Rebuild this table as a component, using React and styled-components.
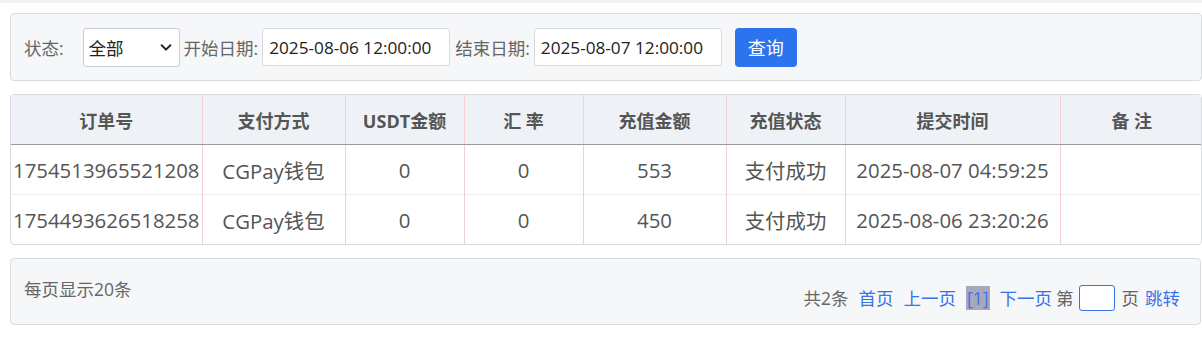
import React from "react";
import styled, { createGlobalStyle } from "styled-components";

const GlobalStyle = createGlobalStyle`
  body {
    margin: 0;
    background: #fff;
    font-family: "Open Sans", "Noto Sans CJK SC", sans-serif;
    color: #555;
  }
`;

const Page = styled.div`
  border-top: 3px solid #f3f3f3;
  padding: 10px 0 0 10px;
  width: 1192px;
`;

const Panel = styled.div`
  background: #f6f7f9;
  border: 1px solid #d8dce1;
  border-radius: 4px;
  box-sizing: border-box;
`;

const FilterBar = styled(Panel)`
  height: 68px;
  display: flex;
  align-items: center;
  padding: 0 0 0 13px;
  font-size: 17.5px;
`;

const Label = styled.span`
  color: #666;
  margin-right: ${(p) => p.gap || 4}px;
`;

const Select = styled.div`
  width: 97px;
  height: 39px;
  box-sizing: border-box;
  border: 1px solid #c9cdd2;
  border-radius: 3px;
  background: #fff;
  display: flex;
  align-items: center;
  justify-content: space-between;
  padding: 0 6px 0 5px;
  color: #222;
  margin-right: 4px;
`;

const DateInput = styled.div`
  width: 188px;
  height: 38px;
  box-sizing: border-box;
  border: 1px solid #d6d9dd;
  border-radius: 3px;
  background: #fff;
  display: flex;
  align-items: center;
  padding-left: 6px;
  color: #222;
  font-size: 17.2px;
  margin-right: 5px;
`;

const Button = styled.button`
  margin-left: 8px;
  width: 62px;
  height: 39px;
  border: none;
  border-radius: 4px;
  background: #2b74ee;
  color: #fff;
  font-family: inherit;
  font-size: 18px;
`;

const TableWrap = styled(Panel)`
  margin-top: 13px;
  background: #fff;
  overflow: hidden;
`;

const Table = styled.table`
  width: 100%;
  border-collapse: collapse;
  table-layout: fixed;
`;

const Th = styled.th`
  height: 49px;
  padding: 0;
  background: #eef2f6;
  border-bottom: 1px solid #999;
  border-left: 1px solid #f2cfd0;
  font-size: 18px;
  font-weight: bold;
  color: #555;
  &:first-child {
    border-left: none;
  }
`;

const Td = styled.td`
  height: 49px;
  padding: 0;
  text-align: center;
  font-size: 20.4px;
  color: #555;
  border-left: 1px solid #f2cfd0;
  border-top: 1px solid #eee;
  white-space: nowrap;
  &:first-child {
    border-left: none;
  }
`;

const Pager = styled(Panel)`
  margin-top: 13px;
  height: 67px;
  width: 1191px;
  display: flex;
  justify-content: space-between;
  padding: 0 0 0 13px;
  font-size: 17.5px;
`;

const PerPage = styled.div`
  padding-top: 17px;
  color: #666;
`;

const PageNav = styled.div`
  display: flex;
  align-items: center;
  align-self: flex-end;
  height: 27px;
  margin-bottom: 13px;
  padding-right: 20px;
  color: #666;
`;

const NavLink = styled.span`
  color: #3a73e8;
  margin-left: ${(p) => p.gap ?? 10}px;
`;

const Current = styled.span`
  color: #3a73e8;
  background: #a8a8ba;
  padding: 0 1px;
  margin-left: 10px;
`;

const PageInput = styled.div`
  width: 36px;
  height: 26px;
  box-sizing: border-box;
  border: 1px solid #3a73e8;
  border-radius: 3px;
  background: #fff;
  margin: 0 7px 0 5px;
`;

const cols = [191, 143, 119, 119, 143, 119, 215, 143];
const heads = ["订单号", "支付方式", "USDT金额", "汇 率", "充值金额", "充值状态", "提交时间", "备 注"];
const rows = [
  ["1754513965521208", "CGPay钱包", "0", "0", "553", "支付成功", "2025-08-07 04:59:25", ""],
  ["1754493626518258", "CGPay钱包", "0", "0", "450", "支付成功", "2025-08-06 23:20:26", ""],
];

const Chevron = () => (
  <svg width="14" height="14" viewBox="0 0 16 16">
    <path d="M3 6l5 5 5-5" fill="none" stroke="#222" strokeWidth="2.2" strokeLinecap="round" strokeLinejoin="round" />
  </svg>
);

export default function App() {
  return (
    <>
      <GlobalStyle />
      <Page>
        <FilterBar>
          <Label gap={19}>状态:</Label>
          <Select>
            <span>全部</span>
            <Chevron />
          </Select>
          <Label>开始日期:</Label>
          <DateInput>2025-08-06 12:00:00</DateInput>
          <Label>结束日期:</Label>
          <DateInput>2025-08-07 12:00:00</DateInput>
          <Button>查询</Button>
        </FilterBar>
        <TableWrap>
          <Table>
            <colgroup>
              {cols.map((w, i) => (
                <col key={i} style={{ width: w }} />
              ))}
            </colgroup>
            <thead>
              <tr>
                {heads.map((h) => (
                  <Th key={h}>{h}</Th>
                ))}
              </tr>
            </thead>
            <tbody>
              {rows.map((r) => (
                <tr key={r[0]}>
                  {r.map((c, i) => (
                    <Td key={i}>{c}</Td>
                  ))}
                </tr>
              ))}
            </tbody>
          </Table>
        </TableWrap>
        <Pager>
          <PerPage>每页显示20条</PerPage>
          <PageNav>
            <span>共2条</span>
            <NavLink>首页</NavLink>
            <NavLink>上一页</NavLink>
            <Current>[1]</Current>
            <NavLink>下一页</NavLink>
            <span style={{ marginLeft: 4 }}>第</span>
            <PageInput />
            <span>页</span>
            <NavLink gap={6}>跳转</NavLink>
          </PageNav>
        </Pager>
      </Page>
    </>
  );
}
